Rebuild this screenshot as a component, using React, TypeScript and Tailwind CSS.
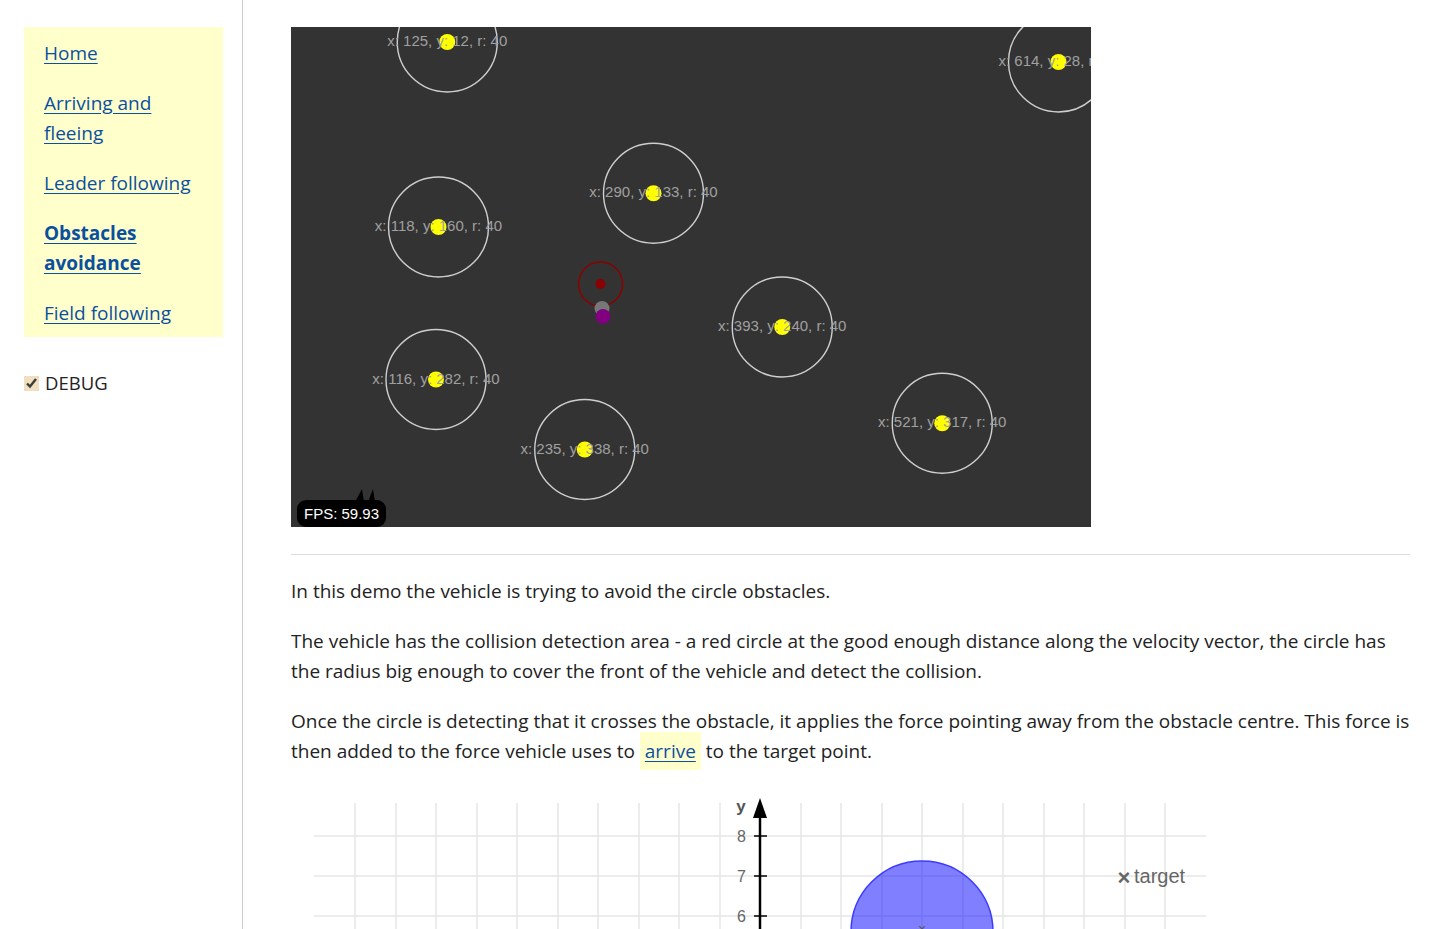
import { useState } from 'react';

const S = 1.25;

// obstacles as the demo reports them (canvas units, drawn at 1.25x)
const obstacles = [
  { x: 125, y: 12 },
  { x: 614, y: 28 },
  { x: 290, y: 133 },
  { x: 118, y: 160 },
  { x: 393, y: 240 },
  { x: 116, y: 282 },
  { x: 235, y: 338 },
  { x: 521, y: 317 },
];

const links = [
  { label: 'Home' },
  { label: 'Arriving and fleeing' },
  { label: 'Leader following' },
  { label: 'Obstacles avoidance', active: true },
  { label: 'Field following' },
];

function DemoCanvas() {
  return (
    <svg width={800} height={500} className="block bg-[#333333]" style={{ fontFamily: '"Liberation Sans", Arial, sans-serif' }}>
      {obstacles.map((o) => {
        const cx = o.x * S;
        const cy = o.y * S;
        return (
          <g key={`${o.x}-${o.y}`}>
            <circle cx={cx} cy={cy} r={50} fill="none" stroke="#cfcfcf" strokeWidth={1.4} />
            <circle cx={cx} cy={cy} r={8} fill="#ffff00" />
            <text x={cx} y={cy - 1.5} textAnchor="middle" dominantBaseline="central" fontSize={15} fill="#a0a0a0">
              {`x: ${o.x}, y: ${o.y}, r: 40`}
            </text>
          </g>
        );
      })}

      {/* vehicle */}
      <circle cx={309.5} cy={257} r={22} fill="none" stroke="#8b0000" strokeWidth={1.5} />
      <circle cx={309.5} cy={257} r={5} fill="#8b0000" />
      <circle cx={311} cy={281.5} r={7.5} fill="#777777" />
      <circle cx={312} cy={289.5} r={7.5} fill="#800080" />

      {/* fps meter */}
      <path d="M64 475 L71 462 L73 475 L77 475 L82 462 L84 475 Z" fill="#000" />
      <rect x={6} y={473} width={89} height={27} rx={9} fill="#000" />
      <text x={13} y={492} fontSize={15} fill="#fff">FPS: 59.93</text>
    </svg>
  );
}

function Chart() {
  const vx = [355, 396, 436, 477, 517, 558, 598, 639, 679, 720, 801, 841, 882, 922, 963, 1003, 1044, 1084, 1125, 1165];
  const hy = [836, 876, 916];
  const ox = 291;
  const oy = 786;
  return (
    <svg width={930} height={160} className="block" style={{ fontFamily: '"Liberation Sans", Arial, sans-serif' }}>
      {vx.map((x) => (
        <line key={x} x1={x - ox} y1={803 - oy} x2={x - ox} y2={160} stroke="#e6e6e6" strokeWidth={1.5} />
      ))}
      {hy.map((y) => (
        <line key={y} x1={314 - ox} y1={y - oy} x2={1206 - ox} y2={y - oy} stroke="#e6e6e6" strokeWidth={1.5} />
      ))}

      <circle cx={922 - ox} cy={932 - oy} r={71} fill="#0000ff" fillOpacity={0.5} stroke="#3b3bff" strokeWidth={1.5} />
      <text x={922 - ox} y={934 - oy} textAnchor="middle" fontSize={14} fill="#555">×</text>

      {/* y axis */}
      <line x1={760 - ox} y1={812 - oy} x2={760 - ox} y2={160} stroke="#000" strokeWidth={2.5} />
      <path d={`M${760 - ox} ${798 - oy} L${753 - ox} ${818 - oy} L${767 - ox} ${818 - oy} Z`} fill="#000" />
      {hy.map((y, i) => (
        <g key={y}>
          <line x1={754 - ox} y1={y - oy} x2={767 - ox} y2={y - oy} stroke="#000" strokeWidth={1.5} />
          <text x={746 - ox} y={y - oy} textAnchor="end" dominantBaseline="central" fontSize={16} fill="#666">
            {8 - i}
          </text>
        </g>
      ))}
      <text x={741 - ox} y={806 - oy} textAnchor="middle" dominantBaseline="central" fontSize={17} fontWeight={700} fill="#555">
        y
      </text>

      <text x={1124 - ox} y={877 - oy} textAnchor="middle" dominantBaseline="central" fontSize={22} fontWeight={700} fill="#666">×</text>
      <text x={1134 - ox} y={876 - oy} dominantBaseline="central" fontSize={20} fill="#666">target</text>
    </svg>
  );
}

export default function App() {
  const [debug, setDebug] = useState(true);

  return (
    <div className="flex min-h-[929px] bg-white text-[#222] font-['Open_Sans',sans-serif] text-[19px]">
      <aside className="w-[243px] shrink-0 pt-[27px] pl-[24px] pr-[19px] border-r border-[#cccccc]">
        <nav className="bg-[#ffffcc] px-5 pt-[11px] pb-[9px] flex flex-col gap-5">
          {links.map((l) => (
            <a
              key={l.label}
              href="#"
              className={`text-[#0b4f9f] underline underline-offset-[3px] leading-[30px] text-[19px] ${l.active ? 'font-bold' : ''}`}
            >
              {l.label}
            </a>
          ))}
        </nav>
        <label className="mt-[31px] flex items-center gap-[6px] text-[18.5px] leading-[30px]">
          <input
            type="checkbox"
            checked={debug}
            onChange={(e) => setDebug(e.target.checked)}
            className="w-[15px] h-[15px] accent-[#f0e0c0]"
          />
          DEBUG
        </label>
      </aside>

      <main className="flex-1 pl-[48px] pr-[19px] pt-[27px] overflow-hidden">
        <DemoCanvas />
        <hr className="mt-[27px] border-t border-[#dddddd]" />
        <div className="leading-[30px] pt-[21px] flex flex-col gap-5">
          <p>In this demo the vehicle is trying to avoid the circle obstacles.</p>
          <p>
            The vehicle has the collision detection area - a red circle at the good enough distance along the velocity
            vector, the circle has the radius big enough to cover the front of the vehicle and detect the collision.
          </p>
          <p>
            Once the circle is detecting that it crosses the obstacle, it applies the force pointing away from the
            obstacle centre. This force is then added to the force vehicle uses to{' '}
            <a href="#" className="bg-[#ffffcc] px-[5px] py-[6px] text-[#0b4f9f] underline underline-offset-[3px]">
              arrive
            </a>{' '}
            to the target point.
          </p>
        </div>
        <div className="mt-[20px]">
          <Chart />
        </div>
      </main>
    </div>
  );
}
